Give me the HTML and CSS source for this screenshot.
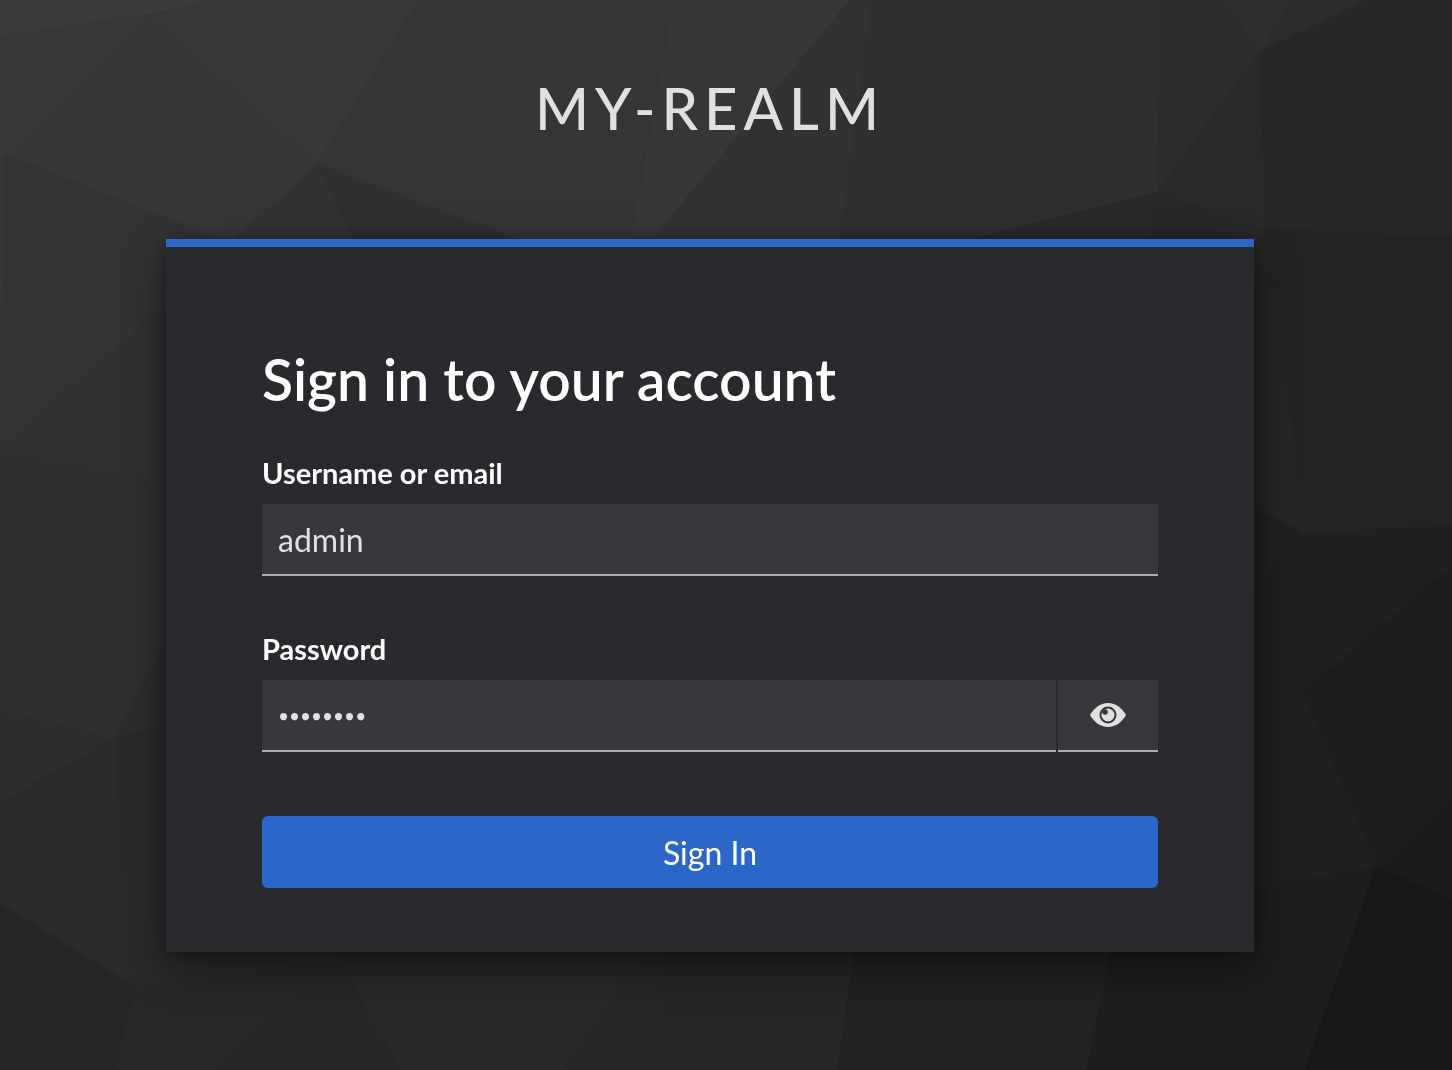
FILE: index.html
```html
<!DOCTYPE html>
<html lang="en">
<head>
<meta charset="utf-8">
<meta name="viewport" content="width=device-width, initial-scale=1">
<title>Sign in to my-realm</title>
<link rel="stylesheet" href="styles.css">
</head>
<body>
<svg class="backdrop" viewBox="0 0 1452 1070" preserveAspectRatio="xMidYMid slice" aria-hidden="true">
  <rect width="1452" height="1070" fill="#2b2b2b"/>
  <!-- top left -->
  <path fill="#3a3a3a" d="M0 0H147V15L0 37Z"/>
  <path fill="#383838" d="M0 37L147 15L7 155L0 158Z"/>
  <path fill="#3b3b3b" d="M147 0H217L146 15Z"/>
  <path fill="#383838" d="M147 15L217 0H419L317 164Z"/>
  <path fill="#373737" d="M147 15L7 155L233 245Z"/>
  <path fill="#363636" d="M147 15L317 164L233 245Z"/>
  <path fill="#353535" d="M0 158L7 155L3 300L0 452Z"/>
  <path fill="#333333" d="M7 155L233 245L0 452L3 300Z"/>
  <path fill="#313131" d="M233 245L0 452L166 485L400 535Z"/>
  <!-- top -->
  <path fill="#353535" d="M419 0H673L630 240H520L317 164Z"/>
  <path fill="#373737" d="M673 0H850L652 240H630Z"/>
  <path fill="#323232" d="M850 0H872L840 240H652Z"/>
  <path fill="#303030" d="M872 0H1161L1157 192L968 240H840Z"/>
  <path fill="#323232" d="M317 164L233 240V300H355V240Z"/>
  <path fill="#303030" d="M317 164L355 240V300H520V240Z"/>
  <path fill="#292929" d="M1157 192L968 240V300H1150Z"/>
  <!-- top right -->
  <path fill="#2d2d2d" d="M1161 0H1222L1260 51L1157 192Z"/>
  <path fill="#2f2f2f" d="M1222 0H1293L1260 51Z"/>
  <path fill="#2d2d2d" d="M1293 0H1366L1260 51Z"/>
  <path fill="#2a2a2a" d="M1260 51L1157 192L1265 229Z"/>
  <path fill="#282828" d="M1157 192L1265 229L1240 260H1148Z"/>
  <path fill="#272727" d="M1260 51L1366 0H1452V236L1265 229Z"/>
  <path fill="#232323" d="M1265 229L1452 236V525L1306 533Z"/>
  <path fill="#252525" d="M1265 229L1306 533L1240 501V260Z"/>
  <!-- left -->
  <path fill="#303030" d="M0 452L166 485V640L115 738L0 711Z"/>
  <path fill="#2d2d2d" d="M180 615L115 738L180 722Z"/>
  <path fill="#2e2e2e" d="M0 711L115 738L0 803Z"/>
  <path fill="#2b2b2b" d="M0 803L115 738L135 987L0 903Z"/>
  <path fill="#2a2a2a" d="M115 738L180 722V980L135 987Z"/>
  <path fill="#262626" d="M0 903L135 987L88 1070H0Z"/>
  <!-- bottom -->
  <path fill="#262626" d="M135 987L88 1070H115Z"/>
  <path fill="#2a2a2a" d="M135 987L180 940H340L335 962Z"/>
  <path fill="#282828" d="M135 987L335 962L210 1070H115Z"/>
  <path fill="#272727" d="M335 962L210 1070H402L345 970Z"/>
  <path fill="#292929" d="M335 940L345 970L402 1070H562L650 940Z"/>
  <path fill="#272727" d="M650 940L562 1070H656L659 940Z"/>
  <path fill="#262626" d="M659 940L656 1070H837L856 940Z"/>
  <path fill="#222222" d="M856 940L837 1070H1086L1113 940Z"/>
  <path fill="#1e1e1e" d="M1113 940L1086 1070H1304L1376 866L1240 889Z"/>
  <!-- right -->
  <path fill="#181818" d="M1376 866L1304 1070H1452V899Z"/>
  <path fill="#1c1c1c" d="M1376 866L1452 899V796Z"/>
  <path fill="#202020" d="M1302 692L1376 866L1240 889V695Z"/>
  <path fill="#1e1e1e" d="M1302 692L1376 866L1452 796V687Z"/>
  <path fill="#1d1d1d" d="M1302 692L1452 565V687Z"/>
  <path fill="#202020" d="M1306 533L1452 525V565L1302 692L1240 695V605Z"/>
  <path fill="#212121" d="M1306 533L1240 501V605Z"/>
</svg>
<div class="login">
  <header class="realm">MY-REALM</header>
  <main class="card">
    <h1 class="title">Sign in to your account</h1>
    <form class="form">
      <div class="field">
        <label class="label" for="username">Username or email</label>
        <input class="input" id="username" type="text" value="admin" autocomplete="username">
      </div>
      <div class="field">
        <label class="label" for="password">Password</label>
        <div class="group">
          <input class="input password" id="password" type="password" value="password" autocomplete="current-password">
          <button class="reveal" type="button" aria-label="Show password">
            <svg class="eye" viewBox="0 0 36 24" aria-hidden="true">
              <path fill="currentColor" d="M0 12C4 5 10 0 18 0S32 5 36 12C32 19 26 24 18 24S4 19 0 12Z"/>
              <circle class="iris" cx="18" cy="12" r="7.5"/>
              <circle class="pupil" cx="15" cy="9" r="2.8"/>
            </svg>
          </button>
        </div>
      </div>
      <button class="submit" type="submit">Sign In</button>
    </form>
  </main>
</div>
</body>
</html>
```
FILE: styles.css
```css
* {
  box-sizing: border-box;
}

body {
  margin: 0;
  min-height: 100vh;
  background: #2b2b2b;
  color: #fff;
  font-family: Lato, "Open Sans", sans-serif;
}

.backdrop {
  position: fixed;
  inset: 0;
  z-index: -1;
  width: 100%;
  height: 100%;
}

.login {
  display: flex;
  flex-direction: column;
  align-items: center;
  padding: 72px 32px 72px 0;
}

.realm {
  margin-bottom: 95px;
  color: #e0e0e0;
  font-size: 58px;
  font-weight: 500;
  line-height: 72px;
  letter-spacing: 6px;
}

.card {
  width: 100%;
  max-width: 1088px;
  padding: 96px 96px 64px;
  border-top: 8px solid #2b66c9;
  background: #292a2d;
  box-shadow: 0 16px 40px rgba(0, 0, 0, 0.45), 0 0 16px rgba(0, 0, 0, 0.25);
}

.title {
  margin: 0 0 37px;
  font-size: 57px;
  font-weight: 600;
  line-height: 72px;
}

.field {
  margin-bottom: 52px;
}

.label {
  display: block;
  margin-bottom: 10px;
  font-size: 29px;
  font-weight: 700;
  line-height: 42px;
}

.input {
  display: block;
  width: 100%;
  min-width: 0;
  height: 72px;
  padding: 0 16px;
  border: 0;
  border-bottom: 2px solid #aaabac;
  border-radius: 0;
  outline: 0;
  background: #37383b;
  color: #e0e0e0;
  font: inherit;
  font-size: 32px;
}

.password {
  font-size: 19px;
}

.group {
  display: flex;
  gap: 2px;
}

.reveal {
  display: grid;
  flex: 0 0 100px;
  place-items: center;
  padding: 0;
  border: 0;
  border-bottom: 2px solid #aaabac;
  background: #37383b;
  color: #e0e0e0;
}

.eye {
  width: 36px;
  height: 24px;
}

.iris {
  fill: none;
  stroke: #37383b;
  stroke-width: 2;
}

.pupil {
  fill: #37383b;
}

.submit {
  display: block;
  width: 100%;
  height: 72px;
  margin-top: 64px;
  border: 0;
  border-radius: 6px;
  background: #2b66c9;
  color: #fff;
  font: inherit;
  font-size: 32px;
}
```
